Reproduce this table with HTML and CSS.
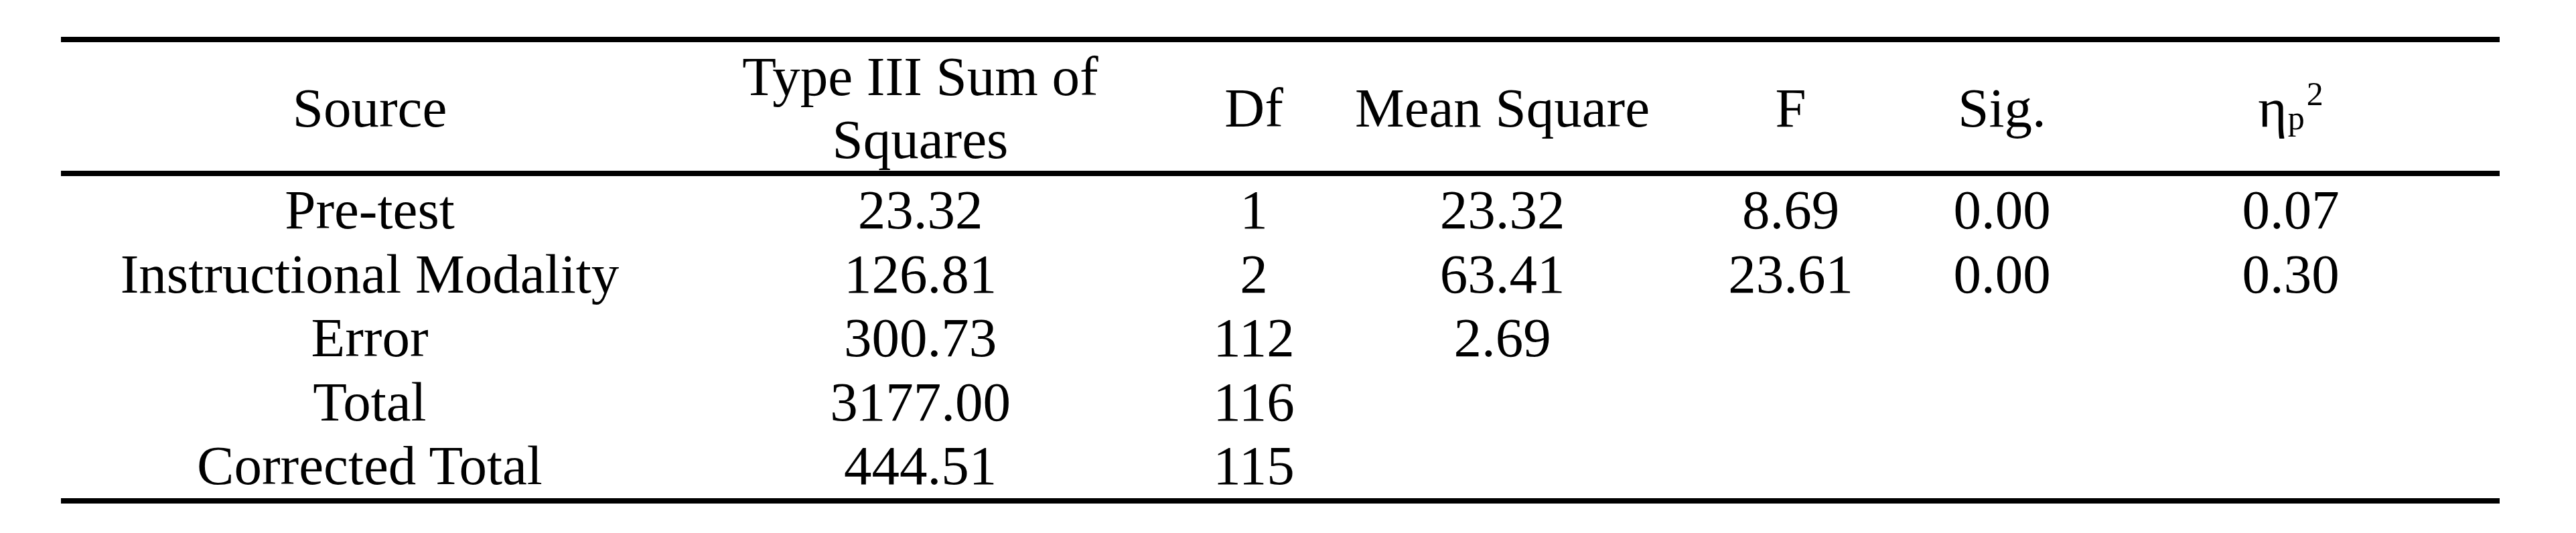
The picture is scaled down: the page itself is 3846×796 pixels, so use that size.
FILE: index.html
```html
<!DOCTYPE html>
<html lang="en">
<head>
<meta charset="utf-8">
<title>ANCOVA Table</title>
<link rel="stylesheet" href="styles.css">
</head>
<body>
<table class="stats">
  <colgroup>
    <col class="c-source">
    <col class="c-ss">
    <col class="c-df">
    <col class="c-ms">
    <col class="c-f">
    <col class="c-sig">
    <col class="c-eta">
  </colgroup>
  <thead>
    <tr>
      <th>Source</th>
      <th>Type III Sum of Squares</th>
      <th>Df</th>
      <th>Mean Square</th>
      <th>F</th>
      <th>Sig.</th>
      <th><span class="eta">η<sub class="sub">p</sub><sup class="sup">2</sup></span></th>
    </tr>
  </thead>
  <tbody>
    <tr class="first">
      <td>Pre-test</td><td>23.32</td><td>1</td><td>23.32</td><td>8.69</td><td>0.00</td><td>0.07</td>
    </tr>
    <tr>
      <td>Instructional Modality</td><td>126.81</td><td>2</td><td>63.41</td><td>23.61</td><td>0.00</td><td>0.30</td>
    </tr>
    <tr>
      <td>Error</td><td>300.73</td><td>112</td><td>2.69</td><td></td><td></td><td></td>
    </tr>
    <tr>
      <td>Total</td><td>3177.00</td><td>116</td><td></td><td></td><td></td><td></td>
    </tr>
    <tr class="last">
      <td>Corrected Total</td><td>444.51</td><td>115</td><td></td><td></td><td></td><td></td>
    </tr>
  </tbody>
</table>
</body>
</html>
```
FILE: styles.css
```css
html, body {
  margin: 0;
  padding: 0;
  background: #ffffff;
}

body {
  padding: 55px 0 0 91px;
  font-family: "Liberation Serif", "Times New Roman", serif;
  color: #000000;
}

.stats {
  width: 3641px;
  table-layout: fixed;
  border-collapse: separate;
  border-spacing: 0;
  font-size: 83px;
}

.c-source { width: 922px; }
.c-ss { width: 722px; }
.c-df { width: 274px; }
.c-ms { width: 468px; }
.c-f { width: 393px; }
.c-sig { width: 238px; }
.c-eta { width: 624px; }

.stats th {
  font-weight: normal;
  text-align: center;
  vertical-align: middle;
  line-height: 94px;
  padding: 4px 4px 0 4px;
  border-top: 8px solid #000;
  border-bottom: 8px solid #000;
}

.stats td {
  text-align: center;
  vertical-align: top;
  line-height: 95.5px;
  padding: 0 4px;
  white-space: nowrap;
}

.stats tr.first td {
  padding-top: 3px;
}

.stats tr.last td {
  border-bottom: 8px solid #000;
}

.eta {
  position: relative;
  display: inline-block;
  line-height: 94px;
}

.eta .sub {
  font-size: 50px;
  line-height: 0;
  vertical-align: -4px;
  margin-left: 1px;
}

.eta .sup {
  font-size: 50px;
  line-height: 0;
  vertical-align: 32px;
  margin-left: 3px;
}
```
